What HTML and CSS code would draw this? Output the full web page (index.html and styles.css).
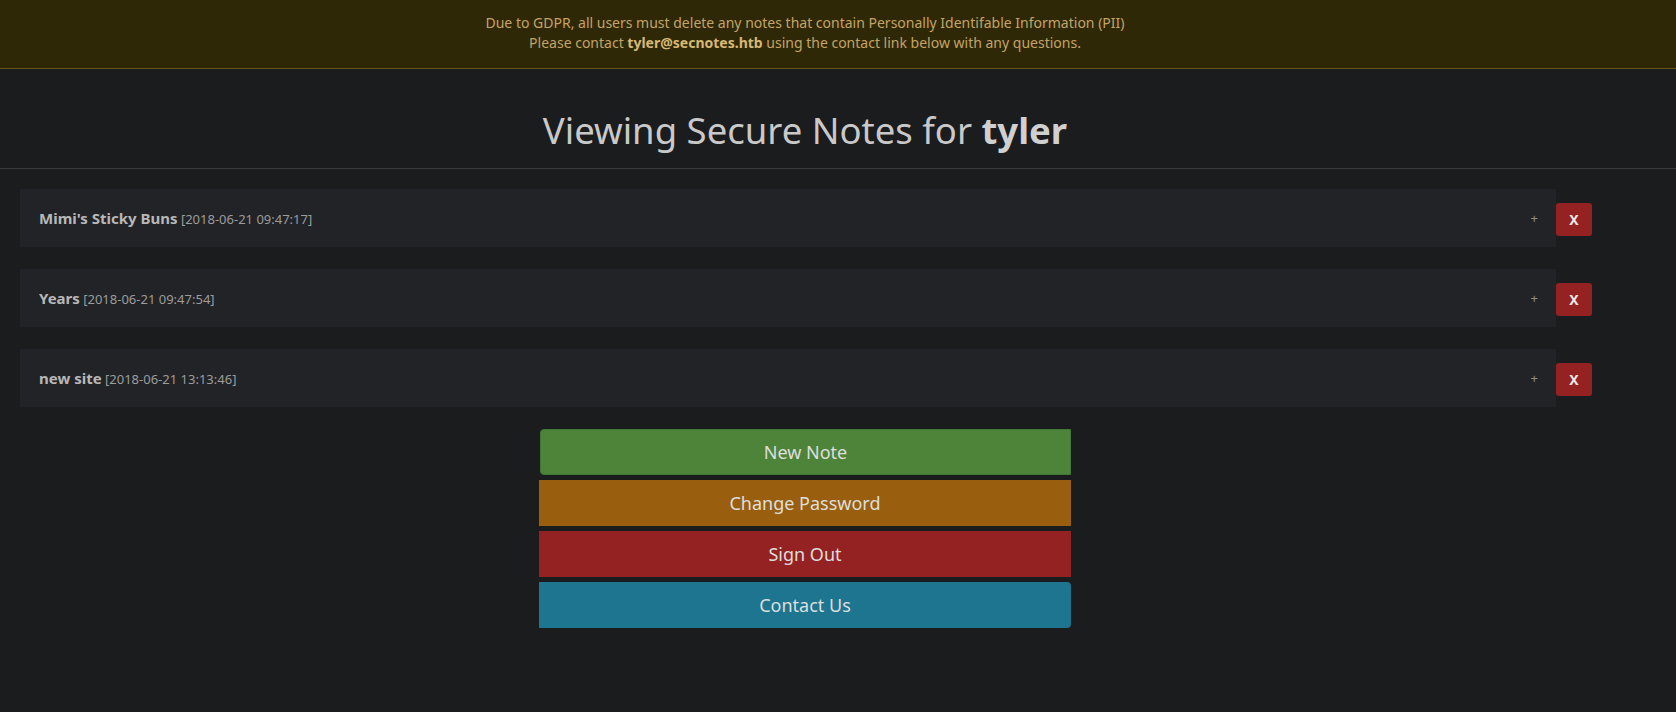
FILE: index.html
```html
<!DOCTYPE html>
<html>
<head>
<meta charset="utf-8">
<title>Secure Notes</title>
<link rel="stylesheet" href="styles.css">
</head>
<body>
<div class="banner">
  <div class="banner-inner">
    <div>Due to GDPR, all users must delete any notes that contain Personally Identifable Information (PII)</div>
    <div>Please contact <strong>tyler@secnotes.htb</strong> using the contact link below with any questions.</div>
  </div>
</div>
<div class="page">
  <h1 class="title">Viewing Secure Notes for <strong>tyler</strong></h1>
</div>
<hr class="rule">
<div class="notes">
  <div class="note-row">
    <div class="note">
      <span class="note-text"><b>Mimi's Sticky Buns</b> <span class="date">[2018-06-21 09:47:17]</span></span>
      <span class="plus">+</span>
    </div>
    <button class="del">X</button>
  </div>
  <div class="note-row">
    <div class="note">
      <span class="note-text"><b>Years</b> <span class="date">[2018-06-21 09:47:54]</span></span>
      <span class="plus">+</span>
    </div>
    <button class="del">X</button>
  </div>
  <div class="note-row">
    <div class="note">
      <span class="note-text"><b>new site</b> <span class="date">[2018-06-21 13:13:46]</span></span>
      <span class="plus">+</span>
    </div>
    <button class="del">X</button>
  </div>
</div>
<div class="actions">
  <a class="btn btn-green">New Note</a>
  <a class="btn btn-orange">Change Password</a>
  <a class="btn btn-red">Sign Out</a>
  <a class="btn btn-blue">Contact Us</a>
</div>
</body>
</html>
```
FILE: styles.css
```css
html, body {
  margin: 0;
  padding: 0;
  background: #1b1c1e;
  font-family: "Noto Sans", "Open Sans", sans-serif;
  color: #c8c8c8;
}
.banner {
  background: #2e2806;
  border-bottom: 1px solid #6a561c;
  padding: 13px 0 15px;
}
.banner-inner {
  width: 1610px;
  text-align: center;
  font-size: 14px;
  line-height: 20px;
  color: #c4a466;
}
.banner-inner strong {
  color: #d8b874;
}
.page {
  width: 1610px;
}
.title {
  margin: 0;
  padding-top: 37px;
  padding-bottom: 13px;
  text-align: center;
  font-size: 36.5px;
  line-height: 49px;
  font-weight: normal;
  color: #c9c9c9;
}
.title strong {
  font-weight: bold;
  color: #d0d0d0;
}
.rule {
  margin: 0;
  border: 0;
  border-top: 1px solid #3a3b3e;
  height: 0;
}
.notes {
  display: flex;
  flex-direction: column;
  gap: 22px;
  padding: 20px 0 0 20px;
}
.note-row {
  display: flex;
  align-items: flex-start;
}
.note {
  width: 1536px;
  height: 58px;
  box-sizing: border-box;
  background: #222326;
  display: flex;
  align-items: center;
  justify-content: space-between;
  padding: 0 18px 0 19px;
}
.note-text {
  font-size: 13px;
  color: #9c9c9c;
}
.note-text b {
  font-size: 15px;
  color: #b8b8b8;
}
.plus {
  font-size: 13px;
  color: #8e8e8e;
}
.del {
  margin-top: 14px;
  width: 36px;
  height: 33px;
  border: 0;
  border-radius: 3px;
  background: #952222;
  color: #e6e6e6;
  font-family: "Noto Sans", sans-serif;
  font-weight: bold;
  font-size: 14px;
  padding: 0;
}
.actions {
  display: flex;
  flex-direction: column;
  gap: 5px;
  width: 532px;
  margin: 22px 0 0 539px;
}
.btn {
  display: flex;
  align-items: center;
  justify-content: center;
  height: 46px;
  font-size: 18px;
  color: #dedede;
}
.btn-green {
  background: #4d843a;
  border: 1px solid #407636;
  box-sizing: border-box;
  border-radius: 4px 0 0 4px;
  margin-left: 1px;
}
.btn-orange { background: #995e0e; }
.btn-red { background: #952222; }
.btn-blue {
  background: #1e7590;
  border-radius: 0 4px 4px 0;
}
```
